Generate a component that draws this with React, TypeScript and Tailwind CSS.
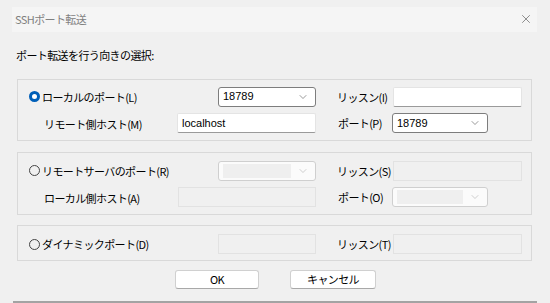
import { X, ChevronDown } from 'lucide-react';

const jp = "font-['Noto_Sans_CJK_JP','Noto_Sans',sans-serif] tracking-[-0.6px]";
const latin = "font-['Liberation_Sans','Noto_Sans_CJK_JP',sans-serif]";

const Radio = ({ checked }: { checked?: boolean }) =>
  checked ? (
    <span className="w-[11px] h-[11px] rounded-full border-[3px] border-[#005fb8] bg-white shrink-0" />
  ) : (
    <span className="w-[11px] h-[11px] rounded-full border border-[#444] bg-[#f0f0f0] shrink-0" />
  );

const Select = ({ value, width, disabled }: { value?: string; width: string; disabled?: boolean }) => (
  <div
    className={`${width} h-[20px] rounded-[3px] border flex items-center justify-between pl-[4px] pr-[6px] ${
      disabled ? 'border-[#cfcfcf] bg-[#fbfbfb]' : 'border-[#7d7d7d] bg-white'
    }`}
  >
    {disabled ? (
      <span className="h-[14px] flex-1 mr-[6px] bg-[#efefef]" />
    ) : (
      <span className={`${latin} text-[11px] text-black`}>{value}</span>
    )}
    <ChevronDown size={12} strokeWidth={1.2} className={disabled ? 'text-[#b0b0b0]' : 'text-[#555]'} />
  </div>
);

const Input = ({ value, width, disabled }: { value?: string; width: string; disabled?: boolean }) => (
  <div
    className={`${width} h-[20px] flex items-center px-[4px] border ${
      disabled
        ? 'bg-[#f0f0f0] border-[#e2e2e2]'
        : 'bg-white border-[#e4e4e4] border-b-[#9a9a9a] rounded-[2px]'
    }`}
  >
    <span className={`${latin} text-[11px] text-black`}>{value}</span>
  </div>
);

const Label = ({ children, className }: { children: React.ReactNode; className?: string }) => (
  <span className={`${jp} text-[11px] leading-[14px] text-black whitespace-nowrap ${className ?? ''}`}>{children}</span>
);

const Button = ({ children, width }: { children: React.ReactNode; width: string }) => (
  <button
    className={`${width} h-[19px] bg-white rounded-[3px] border border-[#d0d0d0] border-b-[#a8a8a8] flex items-center justify-center ${jp} text-[11px] text-black`}
  >
    {children}
  </button>
);

export default function App() {
  return (
    <div className="w-[550px] h-[303px] bg-[#f0f0f0] overflow-hidden flex flex-col">
      {/* Title bar */}
      <div className="mt-[7px] ml-[12px] w-[525px] h-[25px] bg-[#f5f5f5] flex items-center justify-between pl-[3px] pr-[4px]">
        <span className={`${jp} text-[11px] text-[#808080]`}>SSHポート転送</span>
        <X size={14} strokeWidth={1} className="text-[#444]" />
      </div>

      <div className="mt-[10px] ml-[16px]">
        <Label>ポート転送を行う向きの選択:</Label>
      </div>

      {/* Local port */}
      <div className="mt-[13px] ml-[17px] w-[515px] h-[63px] border border-[#d9d9d9] flex flex-col pt-[7px] gap-[6px]">
        <div className="h-[20px] flex items-center">
          <div className="w-[200px] flex items-center gap-[2px] pl-[11px]">
            <Radio checked />
            <Label>ローカルのポート(L)</Label>
          </div>
          <Select value="18789" width="w-[98px]" />
          <Label className="ml-[21px] w-[56px]">リッスン(I)</Label>
          <Input width="w-[129px]" />
        </div>
        <div className="h-[21px] flex items-center">
          <div className="w-[159px] pl-[26px]">
            <Label>リモート側ホスト(M)</Label>
          </div>
          <Input value="localhost" width="w-[139px]" />
          <Label className="ml-[22px] w-[54px]">ポート(P)</Label>
          <Select value="18789" width="w-[96px]" />
        </div>
      </div>

      {/* Remote server port */}
      <div className="mt-[11px] ml-[17px] w-[515px] h-[64px] border border-[#d9d9d9] flex flex-col pt-[8px] gap-[7px]">
        <div className="h-[20px] flex items-center">
          <div className="w-[200px] flex items-center gap-[2px] pl-[11px]">
            <Radio />
            <Label>リモートサーバのポート(R)</Label>
          </div>
          <Select width="w-[98px]" disabled />
          <Label className="ml-[21px] w-[56px]">リッスン(S)</Label>
          <Input width="w-[129px]" disabled />
        </div>
        <div className="h-[19px] flex items-center">
          <div className="w-[160px] pl-[26px]">
            <Label>ローカル側ホスト(A)</Label>
          </div>
          <Input width="w-[138px]" disabled />
          <Label className="ml-[22px] w-[54px]">ポート(O)</Label>
          <Select width="w-[96px]" disabled />
        </div>
      </div>

      {/* Dynamic port */}
      <div className="mt-[10px] ml-[17px] w-[515px] h-[37px] border border-[#d9d9d9] flex flex-col pt-[9px]">
        <div className="h-[19px] flex items-center">
          <div className="w-[200px] flex items-center gap-[2px] pl-[11px]">
            <Radio />
            <Label>ダイナミックポート(D)</Label>
          </div>
          <Input width="w-[98px]" disabled />
          <Label className="ml-[21px] w-[56px]">リッスン(T)</Label>
          <Input width="w-[129px]" disabled />
        </div>
      </div>

      {/* Buttons */}
      <div className="mt-[9px] flex justify-center gap-[31px] pl-[1px]">
        <Button width="w-[84px]">OK</Button>
        <Button width="w-[86px]">キャンセル</Button>
      </div>

      <div className="mt-[12px] ml-[13px] w-[524px] h-[2px] bg-[#a3a3a3]" />
    </div>
  );
}
